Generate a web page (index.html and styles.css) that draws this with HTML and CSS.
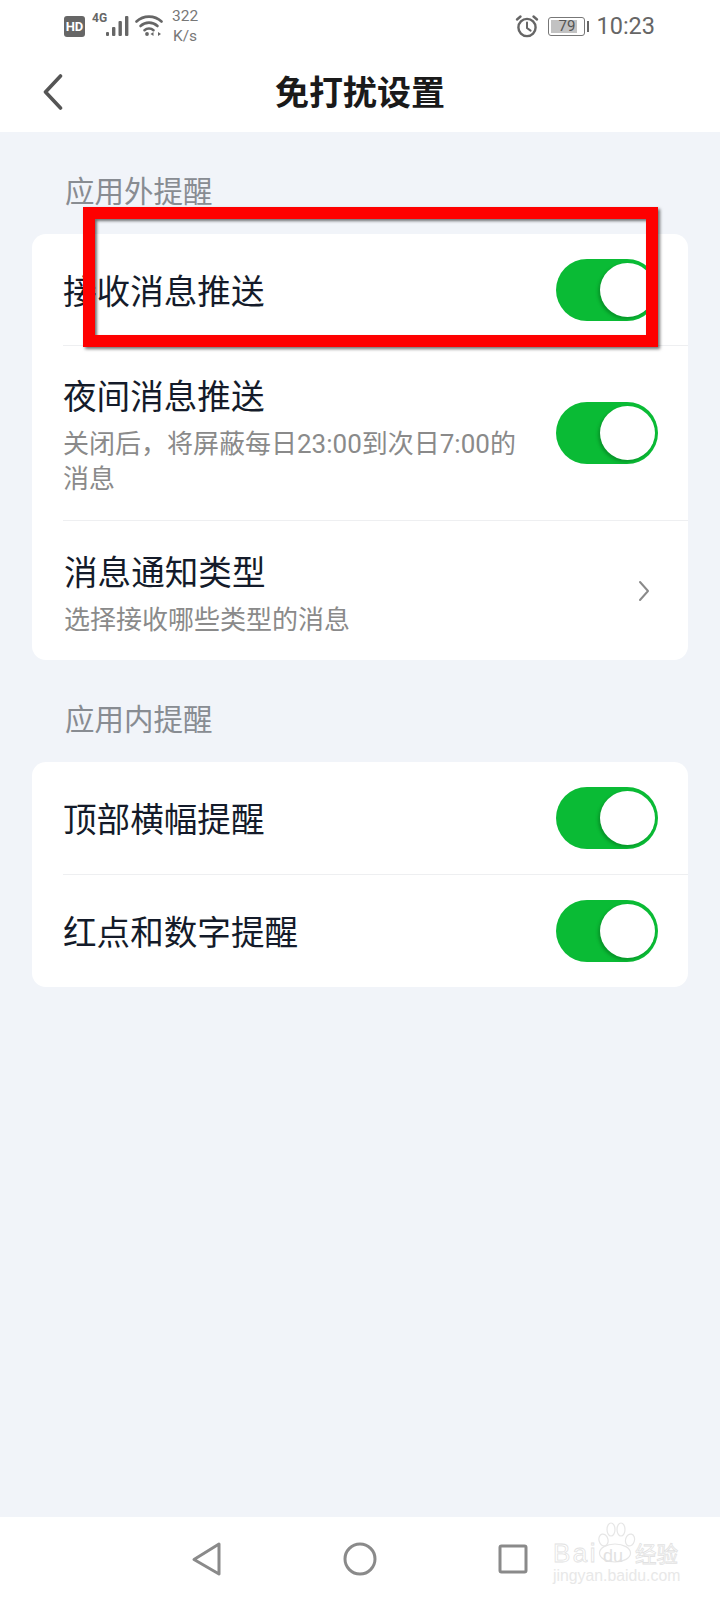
FILE: index.html
```html
<!DOCTYPE html>
<html lang="zh">
<head>
  <meta charset="UTF-8" />
  <meta name="viewport" content="width=device-width, initial-scale=1" />
  <title>免打扰设置</title>
  <link rel="stylesheet" href="styles.css">
</head>
<body>

  <div class="status-bar">
    <div class="status-left">
      <span class="hd">HD</span>
      <span class="net">4G</span>
      <svg class="bars" width="23" height="22" viewBox="0 0 23 22" fill="#666">
        <rect x="0" y="17" width="3" height="4" rx="1"/>
        <rect x="6" y="12" width="3.400" height="9" rx="1"/>
        <rect x="12.500" y="6" width="3.400" height="15" rx="1"/>
        <rect x="19" y="1" width="3.400" height="20" rx="1"/>
      </svg>
      <svg class="wifi" width="28" height="24" viewBox="0 0 28 24" fill="none" stroke="#666" stroke-width="2.600" stroke-linecap="round">
        <path d="M1.500 7.500C8.500 1 19.500 1 26.500 7.500"/>
        <path d="M5.500 12C10.500 7.500 17.500 7.500 22.500 12"/>
        <path d="M9.500 16.200C12 14 16 14 18.500 16.200"/>
        <circle cx="12" cy="20" r="1.900" fill="#666" stroke="none"/>
        <path d="M18.500 18l-3 2 3 2zM23 18l3 2-3 2z" fill="#666" stroke="none"/>
      </svg>
      <span class="speed">322<br>K/s</span>
    </div>
    <div class="status-right">
      <svg class="alarm" width="24" height="24" viewBox="0 0 24 24" fill="none" stroke="#666" stroke-width="2.400" stroke-linecap="round">
        <circle cx="12" cy="13.500" r="8.600"/>
        <path d="M12 8.500v5.500l3.600 2.600" stroke-width="2"/>
        <path d="M2 5.500L5.500 2.500M22 5.500L18.500 2.500"/>
      </svg>
      <div class="battery">
        <div class="battery-body"><span class="battery-fill"></span><span class="battery-num">79</span></div>
        <span class="battery-nib"></span>
      </div>
      <span class="time">10:23</span>
    </div>
  </div>

  <header class="nav">
    <svg class="back" width="20" height="36" viewBox="0 0 20 36" fill="none" stroke="#555" stroke-width="3.600" stroke-linecap="round" stroke-linejoin="round">
      <path d="M17.500 2L2.500 18L17.500 34"/>
    </svg>
    <h1 class="nav-title">免打扰设置</h1>
  </header>

  <main class="content">
    <p class="section-label">应用外提醒</p>
    <div class="card">
      <div class="row row-short">
        <div class="row-text"><div class="row-title">接收消息推送</div></div>
        <div class="toggle"><span class="knob"></span></div>
      </div>
      <div class="row row-night">
        <div class="row-text">
          <div class="row-title">夜间消息推送</div>
          <div class="row-sub">关闭后，将屏蔽每日23:00到次日7:00的<br>消息</div>
        </div>
        <div class="toggle"><span class="knob"></span></div>
      </div>
      <div class="row row-link">
        <div class="row-text">
          <div class="row-title">消息通知类型</div>
          <div class="row-sub">选择接收哪些类型的消息</div>
        </div>
        <svg class="chevron" width="14" height="22" viewBox="0 0 14 22" fill="none" stroke="#8a8a8a" stroke-width="2" stroke-linecap="round" stroke-linejoin="round">
          <path d="M3 2l8 9-8 9"/>
        </svg>
      </div>
    </div>

    <p class="section-label">应用内提醒</p>
    <div class="card">
      <div class="row row-short">
        <div class="row-text"><div class="row-title">顶部横幅提醒</div></div>
        <div class="toggle"><span class="knob"></span></div>
      </div>
      <div class="row row-short">
        <div class="row-text"><div class="row-title">红点和数字提醒</div></div>
        <div class="toggle"><span class="knob"></span></div>
      </div>
    </div>
  </main>

  <footer class="nav-bar">
    <svg class="nav-icon" width="32" height="36" viewBox="0 0 32 36" fill="none" stroke="#8a8a8a" stroke-width="3" stroke-linejoin="round">
      <path d="M28 3L3 18.500L28 33Z"/>
    </svg>
    <svg class="nav-icon" width="36" height="36" viewBox="0 0 36 36" fill="none" stroke="#8a8a8a" stroke-width="3">
      <circle cx="18" cy="18" r="15"/>
    </svg>
    <svg class="nav-icon" width="32" height="32" viewBox="0 0 32 32" fill="none" stroke="#8a8a8a" stroke-width="3" stroke-linejoin="round">
      <rect x="3" y="3" width="26" height="26" rx="1.500"/>
    </svg>
  </footer>

  <div class="watermark">
    <svg class="paw" width="38" height="41" viewBox="0 0 38 41" fill="#fff" stroke="#e6e6e6" stroke-width="1.200">
      <ellipse cx="5.500" cy="18" rx="4.500" ry="6" transform="rotate(-15 5.500 18)"/>
      <ellipse cx="13" cy="7.500" rx="4" ry="6.500"/>
      <ellipse cx="23" cy="7.500" rx="4" ry="6.500"/>
      <ellipse cx="32" cy="18" rx="4.500" ry="6" transform="rotate(15 32 18)"/>
      <ellipse cx="17" cy="31" rx="15.500" ry="9"/>
    </svg>
    <div class="wm-logo"><span class="wm-bai">Bai</span><span class="wm-du">du</span><span class="wm-cn">经验</span></div>
    <div class="wm-url">jingyan.baidu.com</div>
  </div>

  <div class="red-box"></div>

</body>
</html>
```

FILE: styles.css
```css
* {
  box-sizing: border-box;
}
body {
  margin: 0;
  width: 720px;
  height: 1600px;
  position: relative;
  overflow: hidden;
  display: flex;
  flex-direction: column;
  background: #f1f4f9;
  font-family: Roboto, "Noto Sans CJK SC", sans-serif;
  color: #141b2a;
}

/* status bar */
.status-bar {
  height: 52px;
  background: white;
  display: flex;
  justify-content: space-between;
  align-items: center;
  padding: 0 65px 0 64px;
  color: #666;
}
.status-left {
  display: flex;
  align-items: center;
}
.status-right {
  display: flex;
  align-items: center;
}
.hd {
  width: 21px;
  height: 21px;
  border-radius: 3px;
  background: #666;
  color: white;
  font-size: 13px;
  font-weight: bold;
  line-height: 21px;
  text-align: center;
}
.net {
  font-size: 12px;
  font-weight: bold;
  margin: -16px 0 0 7px;
  width: 14px;
}
.wifi {
  margin-left: 6px;
}
.speed {
  font-size: 15.500px;
  line-height: 20px;
  text-align: center;
  margin-left: 9px;
  color: #777;
}
.alarm {
  margin-right: 9px;
}
.battery {
  display: flex;
  align-items: center;
  margin-right: 7px;
}
.battery-body {
  width: 37px;
  height: 19px;
  border: 1px solid #777;
  border-radius: 3px;
  padding: 2px;
  position: relative;
}
.battery-fill {
  display: block;
  width: 26px;
  height: 13px;
  background: #c2c2c2;
}
.battery-num {
  position: absolute;
  left: 9px;
  top: 0;
  font-size: 15px;
  line-height: 17px;
  color: #555;
}
.battery-nib {
  width: 2px;
  height: 11px;
  margin-left: 2px;
  background: #666;
}
.time {
  font-size: 23.500px;
  color: #666;
}

/* header */
.nav {
  height: 80px;
  background: white;
  position: relative;
  display: flex;
  align-items: center;
  justify-content: center;
}
.back {
  position: absolute;
  left: 43px;
  top: 22px;
}
.nav-title {
  margin: 0 0 -1px 0;
  font-size: 34px;
  font-weight: bold;
  line-height: 48px;
  color: #1a1a1a;
}

/* settings list */
.content {
  flex: 1;
}
.section-label {
  margin: 40px 0 22px 65px;
  font-size: 29.500px;
  line-height: 40px;
  color: #888c92;
}
.card {
  margin: 0 32px;
  background: white;
  border-radius: 14px;
}
.row {
  margin-left: 31px;
  padding: 23px 30px 22px 0;
  display: flex;
  justify-content: space-between;
  align-items: center;
  border-top: 1px solid #eeeff1;
}
.row:first-child {
  border-top: 0;
}
.row-text {
  padding-top: 6px;
}
.row-short {
  padding: 0 30px 0 0;
  height: 113px;
}
.row-short:first-child {
  height: 112px;
}
.card:first-of-type .row-short:first-child {
  height: 111px;
}
.row-night {
  padding: 22px 30px 23px 0;
}
.row-link {
  padding-right: 37px;
}
.row-link .row-text {
  padding-left: 1px;
}
.row-title {
  font-size: 33.600px;
  line-height: 48px;
}
.row-sub {
  margin-top: 5px;
  font-size: 26px;
  line-height: 35px;
  color: #8a8a8a;
}
.toggle {
  width: 102px;
  height: 62px;
  padding: 4px 3px;
  border-radius: 31px;
  background: #0abb35;
  display: flex;
  justify-content: flex-end;
}
.knob {
  width: 55px;
  height: 54px;
  border-radius: 50%;
  background: white;
  box-shadow: -2px 2px 3px rgba(0, 80, 20, 0.35);
}

/* bottom navigation */
.nav-bar {
  height: 83px;
  background: white;
  display: flex;
  align-items: center;
  padding: 0 191px;
  justify-content: space-between;
}

/* baidu watermark */
.watermark {
  position: absolute;
  left: 553px;
  top: 1520px;
  width: 130px;
  height: 64px;
  color: #e8e8e8;
}
.paw {
  position: absolute;
  left: 45px;
  top: 2px;
}
.wm-logo {
  position: absolute;
  left: 0;
  top: 20px;
  width: 130px;
  display: flex;
  align-items: baseline;
  font-family: "Liberation Sans", sans-serif;
  line-height: 26px;
  white-space: nowrap;
}
.wm-bai {
  font-size: 26px;
  letter-spacing: 2.500px;
  color: white;
  -webkit-text-stroke: 0.800px #e2e2e2;
}
.wm-du {
  position: relative;
  margin-left: 5px;
  font-size: 18px;
  color: #e2e2e2;
}
.wm-cn {
  font-family: "Noto Sans CJK SC", sans-serif;
  font-size: 21.500px;
  margin-left: 12px;
  color: white;
  -webkit-text-stroke: 0.800px #e2e2e2;
}
.wm-url {
  position: absolute;
  left: 0;
  top: 47px;
  font-family: "Liberation Sans", sans-serif;
  font-size: 15.800px;
  line-height: 18px;
  white-space: nowrap;
}

/* red annotation */
.red-box {
  position: absolute;
  left: 83px;
  top: 207px;
  width: 575px;
  height: 140px;
  border: 12px solid #fe0000;
  box-shadow: 2px 2px 3px rgba(0, 0, 0, 0.55), inset 2px 2px 3px rgba(0, 0, 0, 0.55);
}
```
